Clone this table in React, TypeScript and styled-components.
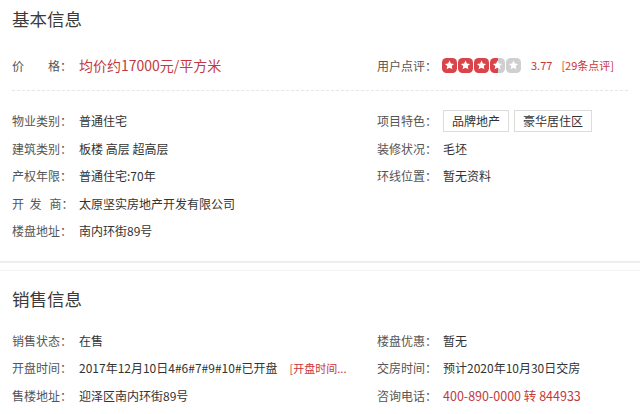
import React from 'react'
import styled, { createGlobalStyle } from 'styled-components'

const GlobalStyle = createGlobalStyle`
  body {
    margin: 0;
    background: #fff;
    font-family: "Noto Sans CJK SC", "Noto Sans", sans-serif;
    color: #333;
  }
`

const Page = styled.div`
  width: 640px;
  height: 414px;
  overflow: hidden;
  background: #fff;
`

const Section = styled.div<{ $last?: boolean }>`
  padding: 0 12px ${({ $last }) => ($last ? '0' : '16px')};
  border-bottom: ${({ $last }) => ($last ? 'none' : '2px solid #eeeeee')};
  border-top: ${({ $last }) => ($last ? '1px solid #f2f2f2' : 'none')};
  margin-top: ${({ $last }) => ($last ? '7px' : '0')};
`

const Heading = styled.div<{ $h: number }>`
  height: ${({ $h }) => $h}px;
  line-height: ${({ $h }) => $h}px;
  font-size: 17.5px;
  color: #3a3a3a;
`

const TopBlock = styled.div`
  display: flex;
  margin-top: 12px;
  padding-bottom: 10px;
  border-bottom: 1px dashed #e6e6e6;
`

const Columns = styled.div<{ $pt: number }>`
  display: flex;
  padding-top: ${({ $pt }) => $pt}px;
`

const Col = styled.div<{ $w?: number }>`
  display: flex;
  flex-direction: column;
  width: ${({ $w }) => ($w ? `${$w}px` : 'auto')};
  flex: ${({ $w }) => ($w ? 'none' : '1')};
`

const Row = styled.div<{ $h?: number }>`
  display: flex;
  align-items: center;
  height: ${({ $h }) => $h || 27.5}px;
  font-size: 12px;
  white-space: nowrap;
`

const Label = styled.span<{ $w?: number }>`
  width: ${({ $w }) => $w || 67}px;
  flex: none;
  color: #555;
  white-space: pre;
`

const Value = styled.span<{ $red?: boolean; $size?: number }>`
  color: ${({ $red }) => ($red ? '#c23a40' : '#333')};
  font-size: ${({ $size }) => $size || 12}px;
`

const Note = styled.span<{ $ml?: number }>`
  color: #c9363c;
  font-size: 11px;
  margin-left: ${({ $ml }) => $ml || 0}px;
`

const Tag = styled.span`
  display: inline-block;
  height: 20px;
  line-height: 20px;
  padding: 0 8px;
  border: 1px solid #dcdcdc;
  color: #333;
  font-size: 12px;
  margin-right: 5px;
  background: #fff;
`

const Stars = styled.span`
  display: inline-flex;
  gap: 1px;
`

const Star = ({ fill, id }: { fill: number; id: string }) => (
  <svg width="15" height="15" viewBox="0 0 15 15">
    <defs>
      <linearGradient id={id} x1="0" x2="1" y1="0" y2="0">
        <stop offset={fill} stopColor="#d9434a" />
        <stop offset={fill} stopColor="#cfcfcf" />
      </linearGradient>
    </defs>
    <rect x="0" y="0" width="15" height="15" rx="4.5" fill={`url(#${id})`} />
    <path
      d="M7.5 2.6 L8.9 5.6 L12.1 5.9 L9.7 8.1 L10.4 11.3 L7.5 9.7 L4.6 11.3 L5.3 8.1 L2.9 5.9 L6.1 5.6 Z"
      fill="#fff"
    />
  </svg>
)

export default function App() {
  return (
    <Page>
      <GlobalStyle />
      <Section>
        <Heading $h={38}>基本信息</Heading>
        <TopBlock>
          <Col $w={365}>
            <Row $h={30}>
              <Label>{'价　　格：'}</Label>
              <Value $red $size={14}>均价约17000元/平方米</Value>
            </Row>
          </Col>
          <Col>
            <Row $h={30}>
              <Label $w={65}>用户点评：</Label>
              <Stars>
                <Star id="s1" fill={1} />
                <Star id="s2" fill={1} />
                <Star id="s3" fill={1} />
                <Star id="s4" fill={0.5} />
                <Star id="s5" fill={0} />
              </Stars>
              <Note $ml={10}>3.77</Note>
              <Note $ml={9}>[29条点评]</Note>
            </Row>
          </Col>
        </TopBlock>
        <Columns $pt={16}>
          <Col $w={365}>
            <Row>
              <Label>物业类别：</Label>
              <Value>普通住宅</Value>
            </Row>
            <Row>
              <Label>建筑类别：</Label>
              <Value>板楼 高层 超高层</Value>
            </Row>
            <Row>
              <Label>产权年限：</Label>
              <Value>普通住宅:70年</Value>
            </Row>
            <Row>
              <Label>{'开  发   商：'}</Label>
              <Value>太原坚实房地产开发有限公司</Value>
            </Row>
            <Row>
              <Label>楼盘地址：</Label>
              <Value>南内环街89号</Value>
            </Row>
          </Col>
          <Col>
            <Row>
              <Label $w={66}>项目特色：</Label>
              <Tag>品牌地产</Tag>
              <Tag>豪华居住区</Tag>
            </Row>
            <Row>
              <Label $w={66}>装修状况：</Label>
              <Value>毛坯</Value>
            </Row>
            <Row>
              <Label $w={66}>环线位置：</Label>
              <Value>暂无资料</Value>
            </Row>
          </Col>
        </Columns>
      </Section>
      <Section $last>
        <Heading $h={56}>销售信息</Heading>
        <Columns $pt={0}>
          <Col $w={365}>
            <Row>
              <Label>销售状态：</Label>
              <Value>在售</Value>
            </Row>
            <Row>
              <Label>开盘时间：</Label>
              <Value>2017年12月10日4#6#7#9#10#已开盘</Value>
              <Note $ml={12}>[开盘时间...</Note>
            </Row>
            <Row>
              <Label>售楼地址：</Label>
              <Value>迎泽区南内环街89号</Value>
            </Row>
          </Col>
          <Col>
            <Row>
              <Label $w={66}>楼盘优惠：</Label>
              <Value>暂无</Value>
            </Row>
            <Row>
              <Label $w={66}>交房时间：</Label>
              <Value>预计2020年10月30日交房</Value>
            </Row>
            <Row>
              <Label $w={66}>咨询电话：</Label>
              <Value $red $size={12.5}>400-890-0000 转 844933</Value>
            </Row>
          </Col>
        </Columns>
      </Section>
    </Page>
  )
}
